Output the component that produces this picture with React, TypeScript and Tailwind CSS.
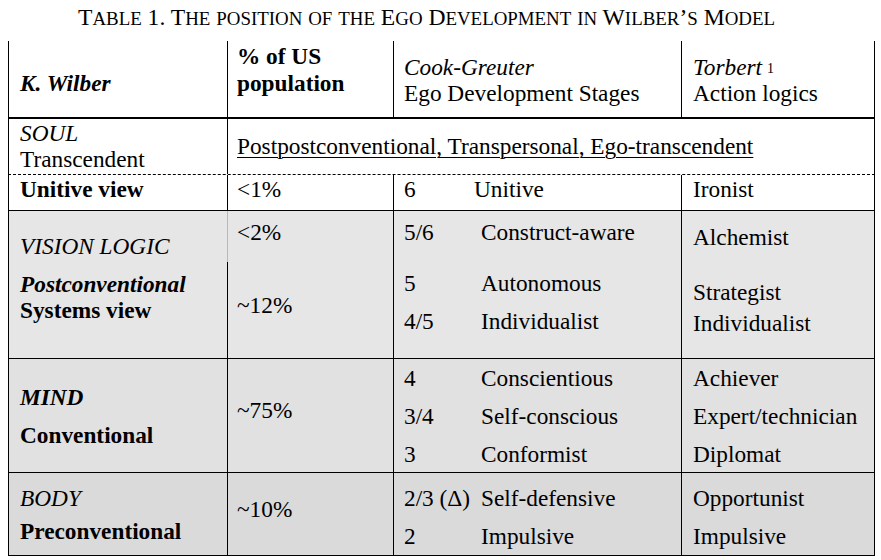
import React from "react";

const Stage = ({ n, name, w = "w-[77px]" }: { n: string; name: string; w?: string }) => (
  <div className="flex">
    <span className={`${w} shrink-0`}>{n}</span>
    <span>{name}</span>
  </div>
);

const SmallCaps = ({ text }: { text: string }) => {
  const runs: { low: boolean; s: string }[] = [];
  for (const ch of text) {
    const low = ch !== ch.toUpperCase();
    const last = runs[runs.length - 1];
    if (last && last.low === low) last.s += ch;
    else runs.push({ low, s: ch });
  }
  return (
    <>
      {runs.map((r, i) =>
        r.low ? (
          <span key={i} className="text-[0.8em]">
            {r.s.toUpperCase()}
          </span>
        ) : (
          <span key={i}>{r.s}</span>
        )
      )}
    </>
  );
};

export default function App() {
  return (
    <div className="w-[881px] h-[560px] bg-white text-black [font-family:'Liberation_Serif',serif] text-[23.3px] overflow-hidden">
      <div className="h-[41px] pt-[4px] pr-[28px] text-center text-[23.6px] leading-[26px]">
        <SmallCaps text="Table 1. The position of the Ego Development in Wilber’s Model" />
      </div>
      <div className="ml-[8px] w-[867px]">
        {/* header */}
        <div className="grid grid-cols-[219px_166px_288px_194px] h-[78px] border-b-2 border-black">
          <div className="border-l border-black pl-[11px] pt-[29px] leading-[26px] font-bold italic">K. Wilber</div>
          <div className="border-l border-black pl-[9px] pt-[2px] leading-[27px] font-bold">
            <div>% of US</div>
            <div>population</div>
          </div>
          <div className="border-l border-black pl-[10px] pt-[13px] leading-[26px]">
            <div className="italic">Cook-Greuter</div>
            <div>Ego Development Stages</div>
          </div>
          <div className="border-l border-r border-black pl-[11px] pt-[13px] leading-[26px]">
            <div>
              <span className="italic">Torbert</span>
              <sup className="ml-[5px] text-[14px] relative top-[-2px]">1</sup>
            </div>
            <div>Action logics</div>
          </div>
        </div>

        {/* SOUL */}
        <div className="grid grid-cols-[219px_648px] h-[56px] border-b border-dashed border-black">
          <div className="border-l border-black pl-[11px] pt-[1px] leading-[26px]">
            <div className="italic">SOUL</div>
            <div>Transcendent</div>
          </div>
          <div className="border-l border-r border-black pl-[9px] pt-[14px] leading-[26px]">
            <span className="underline decoration-1 underline-offset-[3px]">
              Postpostconventional, Transpersonal, Ego-transcendent
            </span>
          </div>
        </div>

        {/* Unitive */}
        <div className="grid grid-cols-[219px_166px_288px_194px] h-[36px] border-b border-black leading-[26px]">
          <div className="border-l border-black pl-[11px] pt-[1px] font-bold">Unitive view</div>
          <div className="border-l border-black pl-[9px] pt-[1px]">&lt;1%</div>
          <div className="border-l border-black pl-[10px] pt-[1px]">
            <Stage n="6" name="Unitive" w="w-[70px]" />
          </div>
          <div className="border-l border-r border-black pl-[11px] pt-[1px]">Ironist</div>
        </div>

        {/* Vision logic */}
        <div className="grid grid-cols-[219px_166px_288px_194px] h-[148px] border-b border-black bg-[#e6e6e6] leading-[26px]">
          <div className="border-l border-black pl-[11px] pt-[22px]">
            <div className="italic">VISION LOGIC</div>
            <div className="mt-[12px] font-bold italic">Postconventional</div>
            <div className="font-bold">Systems view</div>
          </div>
          <div className="flex flex-col">
            <div className="h-[51px] border-l border-[#b8b8b8] pl-[9px] pt-[8px]">&lt;2%</div>
            <div className="flex-1 border-l border-black pl-[9px] pt-[30px]">~12%</div>
          </div>
          <div className="border-l border-black pl-[10px] pt-[8px]">
            <Stage n="5/6" name="Construct-aware" />
            <div className="mt-[25px]">
              <Stage n="5" name="Autonomous" />
            </div>
            <div className="mt-[12px]">
              <Stage n="4/5" name="Individualist" />
            </div>
          </div>
          <div className="border-l border-r border-black pl-[11px] pt-[13px]">
            <div>Alchemist</div>
            <div className="mt-[29px]">Strategist</div>
            <div className="mt-[5px]">Individualist</div>
          </div>
        </div>

        {/* MIND */}
        <div className="grid grid-cols-[219px_166px_288px_194px] h-[114px] border-b border-black bg-[#e1e1e1] leading-[26px]">
          <div className="border-l border-black pl-[11px] pt-[25px]">
            <div className="font-bold italic">MIND</div>
            <div className="mt-[12px] font-bold">Conventional</div>
          </div>
          <div className="border-l border-black pl-[9px] pt-[38px]">~75%</div>
          <div className="border-l border-black pl-[10px] pt-0 leading-[38px]">
            <Stage n="4" name="Conscientious" />
            <Stage n="3/4" name="Self-conscious" />
            <Stage n="3" name="Conformist" />
          </div>
          <div className="border-l border-r border-black pl-[11px] pt-0 leading-[38px]">
            <div>Achiever</div>
            <div>Expert/technician</div>
            <div>Diplomat</div>
          </div>
        </div>

        {/* BODY */}
        <div className="grid grid-cols-[219px_166px_288px_194px] h-[83px] border-b border-black bg-[#dadada] leading-[26px]">
          <div className="border-l border-black pl-[11px] pt-[12px]">
            <div className="italic">BODY</div>
            <div className="mt-[7px] font-bold">Preconventional</div>
          </div>
          <div className="border-l border-black pl-[9px] pt-[23px]">~10%</div>
          <div className="border-l border-black pl-[10px] pt-[6px] leading-[38px]">
            <Stage n="2/3 (Δ)" name="Self-defensive" />
            <Stage n="2" name="Impulsive" />
          </div>
          <div className="border-l border-r border-black pl-[11px] pt-[6px] leading-[38px]">
            <div>Opportunist</div>
            <div>Impulsive</div>
          </div>
        </div>
      </div>
    </div>
  );
}
